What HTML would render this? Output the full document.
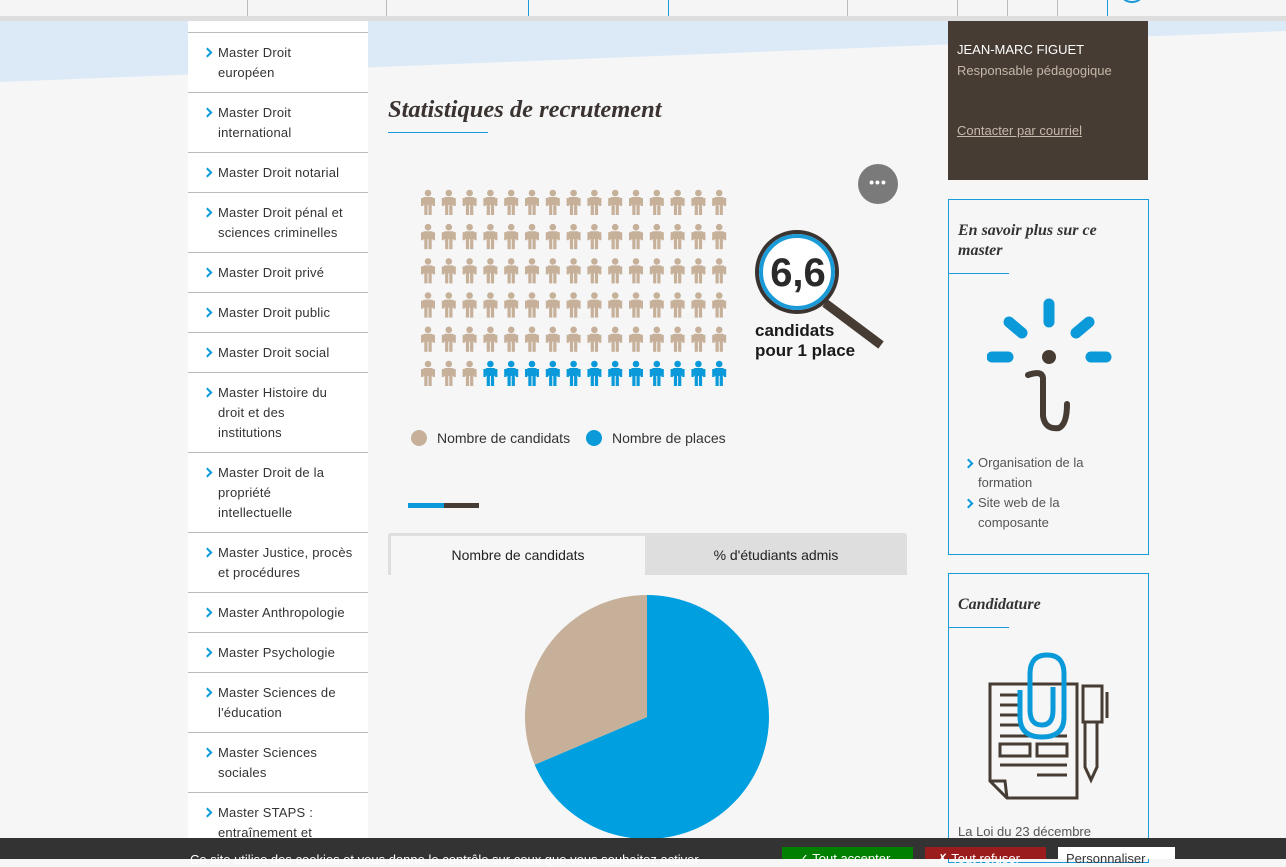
<!DOCTYPE html>
<html><head><meta charset="utf-8"><style>
*{margin:0;padding:0;box-sizing:border-box}
body{width:1286px;height:859px;overflow:hidden;background:#f6f6f6;font-family:"Liberation Sans",sans-serif;position:relative;color:#333}
.abs{position:absolute}
.sep{position:absolute;top:0;height:16px;width:1px;background:#bbb}
#side{left:188px;top:21px;width:180px;height:817px;background:#fff}
#side div{border-top:1px solid #bbb;padding:10px 8px 9px 30px;font-size:13px;line-height:20px;color:#333;position:relative;letter-spacing:.2px}
#side div:before{content:"";position:absolute;left:16px;top:16px;width:5px;height:5px;border-right:2px solid #0a9ad9;border-top:2px solid #0a9ad9;transform:rotate(45deg)}
.box{position:absolute;left:948px;width:201px;border:1px solid #1a9ad6}
.box h3{font-family:"Liberation Serif",serif;font-style:italic;font-weight:bold;font-size:16px;color:#333;padding:21px 9px 12px;line-height:20px}
.box .ul{width:60px;height:1px;background:#1a9ad6}
.lk{font-size:13px;line-height:20px;color:#555;padding-left:29px;position:relative}
.lk:before{content:"";position:absolute;left:16px;top:7px;width:5px;height:5px;border-right:2px solid #0a9ad9;border-top:2px solid #0a9ad9;transform:rotate(45deg)}
</style></head><body>
<div class="abs" style="left:0;top:0;width:1286px;height:16px;background:#f5f5f5"></div>
<div class="sep" style="left:247px"></div><div class="sep" style="left:386px"></div><div class="sep" style="left:528px;background:#1a9ad6"></div><div class="sep" style="left:668px;background:#1a9ad6"></div><div class="sep" style="left:847px"></div><div class="sep" style="left:957px"></div><div class="sep" style="left:1007px"></div><div class="sep" style="left:1057px"></div><div class="sep" style="left:1107px;background:#1a9ad6"></div>
<div class="abs" style="left:1122px;top:-10px;width:20px;height:13px;border-radius:50%;border:2px solid #1a9ad6"></div>
<div class="abs" style="left:0;top:16px;width:1286px;height:5px;background:#dedede"></div>
<svg class="abs" style="left:0;top:21px" width="1286" height="70"><polygon points="0,0 1286,0 1286,10 0,61" fill="#dceaf8"/></svg>

<div id="side" class="abs" style="padding-top:11px">
<div>Master Droit<br>européen</div>
<div>Master Droit<br>international</div>
<div>Master Droit notarial</div>
<div>Master Droit pénal et<br>sciences criminelles</div>
<div>Master Droit privé</div>
<div>Master Droit public</div>
<div>Master Droit social</div>
<div>Master Histoire du<br>droit et des<br>institutions</div>
<div>Master Droit de la<br>propriété<br>intellectuelle</div>
<div>Master Justice, procès<br>et procédures</div>
<div>Master Anthropologie</div>
<div>Master Psychologie</div>
<div>Master Sciences de<br>l'éducation</div>
<div>Master Sciences<br>sociales</div>
<div>Master STAPS :<br>entraînement et</div>
</div>

<div class="abs" style="left:388px;top:96px;font-family:'Liberation Serif',serif;font-style:italic;font-weight:bold;font-size:24.5px;color:#3a3330;white-space:nowrap">Statistiques de recrutement</div>
<div class="abs" style="left:388px;top:132px;width:100px;height:1px;background:#1a9ad6"></div>
<div class="abs" style="left:858px;top:164px;width:40px;height:40px;border-radius:50%;background:#7a7a7a;color:#fff;font-size:14px;text-align:center;line-height:36px;font-weight:bold;letter-spacing:1px">•••</div>

<svg class="abs" style="left:410px;top:180px" width="330" height="215" id="ppl"></svg>
<script>
(function(){var s='';for(var r=0;r<6;r++)for(var c=0;c<15;c++){var x=11+c*20.8,y=10+r*34.2,col=(r==5&&c>=3)?'#0a9ad9':'#c6b09a';
s+='<g fill="'+col+'" transform="translate('+x+','+y+')"><circle cx="7" cy="3" r="3.3"/><rect x="2" y="7" width="10" height="8" rx="1.5"/><rect x="0" y="8" width="2.4" height="8"/><rect x="11.6" y="8" width="2.4" height="8"/><rect x="3.3" y="14" width="3.2" height="11"/><rect x="7.5" y="14" width="3.2" height="11"/></g>';}
document.getElementById('ppl').innerHTML=s;})();
</script>

<svg class="abs" style="left:750px;top:225px" width="145" height="130">
<line x1="75" y1="78" x2="131" y2="120" stroke="#463c33" stroke-width="9"/>
<circle cx="47" cy="47" r="40" fill="#fff" stroke="#3a3330" stroke-width="4"/>
<circle cx="47" cy="47" r="36" fill="none" stroke="#1a9ad6" stroke-width="4"/>
<text x="48" y="61" text-anchor="middle" font-family="Liberation Sans" font-weight="bold" font-size="40" fill="#2a2a2a">6,6</text>
</svg>
<div class="abs" style="left:755px;top:321px;font-weight:bold;font-size:17px;line-height:20px;color:#1a1a1a">candidats<br>pour 1 place</div>

<div class="abs" style="left:411px;top:430px;width:16px;height:16px;border-radius:50%;background:#c6b09a"></div>
<div class="abs" style="left:437px;top:430px;font-size:14px;color:#333">Nombre de candidats</div>
<div class="abs" style="left:586px;top:430px;width:16px;height:16px;border-radius:50%;background:#0a9ad9"></div>
<div class="abs" style="left:612px;top:430px;font-size:14px;color:#333">Nombre de places</div>

<div class="abs" style="left:408px;top:503px;width:36px;height:5px;background:#0a9ad9"></div>
<div class="abs" style="left:444px;top:503px;width:35px;height:5px;background:#463c33"></div>

<div class="abs" style="left:388px;top:533px;width:519px;height:42px;background:#dedede;border-radius:3px 3px 0 0"></div>
<div class="abs" style="left:391px;top:536px;width:254px;height:39px;background:#f6f6f6;text-align:center;line-height:38px;font-size:14px;color:#222">Nombre de candidats</div>
<div class="abs" style="left:645px;top:536px;width:262px;height:39px;text-align:center;line-height:38px;font-size:14px;color:#222">% d'étudiants admis</div>

<svg class="abs" style="left:520px;top:590px" width="260" height="250">
<path d="M127,127 L127,5 A122,122 0 1,1 14.7,174.7 Z" fill="#009fdf"/>
<path d="M127,127 L14.7,174.7 A122,122 0 0,1 127,5 Z" fill="#c6b09a"/>
</svg>

<div class="abs" style="left:948px;top:21px;width:200px;height:159px;background:#463c33;padding:20px 9px">
<div style="color:#fff;font-size:13px;line-height:18px">JEAN-MARC FIGUET</div>
<div style="color:#c5b9ab;font-size:13px;line-height:20px;margin-top:2px">Responsable pédagogique</div>
<div style="color:#c5b9ab;font-size:13px;line-height:20px;margin-top:40px;text-decoration:underline">Contacter par courriel</div>
</div>

<div class="box" style="top:199px;height:356px">
<h3>En savoir plus sur ce<br>master</h3><div class="ul"></div>
<svg style="display:block;margin:24px 0 0 38px" width="125" height="135">
<g stroke="#0a9ad9" stroke-width="11" stroke-linecap="round">
<line x1="62" y1="6" x2="62" y2="24"/><line x1="22" y1="24" x2="35" y2="35"/><line x1="102" y1="24" x2="89" y2="35"/>
<line x1="5" y1="59" x2="21" y2="59"/><line x1="104" y1="59" x2="119" y2="59"/></g>
<circle cx="62" cy="59" r="7" fill="#463c33"/>
<path d="M41,77 Q55,72 56,80 L56,118 Q58,132 72,130 Q80,126 80,106" fill="none" stroke="#463c33" stroke-width="6" stroke-linecap="round"/>
</svg>
<div style="margin-top:20px"><div class="lk">Organisation de la<br>formation</div><div class="lk">Site web de la<br>composante</div></div>
</div>

<div class="box" style="top:573px;height:290px">
<h3>Candidature</h3><div class="ul"></div>
<svg style="display:block;margin:24px 0 0 38px" width="125" height="150">
<g fill="none" stroke="#463c33" stroke-width="3">
<path d="M3,32 L90,32 L90,146 L20,146 L3,129 Z"/><path d="M3,129 L18,129 L20,146"/>
<line x1="13" y1="43" x2="32" y2="43"/><line x1="13" y1="53" x2="32" y2="53"/><line x1="13" y1="63" x2="32" y2="63"/><line x1="13" y1="73" x2="32" y2="73"/>
<line x1="13" y1="84" x2="80" y2="84"/><rect x="13" y="92" width="30" height="12"/><rect x="50" y="92" width="30" height="12"/>
<line x1="13" y1="113" x2="80" y2="113"/><line x1="50" y1="123" x2="80" y2="123"/>
<rect x="96" y="34" width="19" height="36"/><line x1="120" y1="40" x2="120" y2="66"/>
<path d="M98,70 L98,115 L104,128 L110,115 L110,70"/></g>
<path d="M33,38 L33,65 Q33,85 55,85 Q77,85 77,65 L77,22 Q77,3 60,3 Q43,3 43,22 L43,58 Q43,73 55,73 Q66,73 66,58 L66,35" fill="none" stroke="#0a9ad9" stroke-width="5"/>
</svg>
<div style="font-size:13px;color:#555;padding:22px 9px">La Loi du 23 décembre</div>
</div>

<div class="abs" style="left:0;top:838px;width:1286px;height:21px;background:#333"></div>
<div class="abs" style="left:190px;top:852px;font-size:13px;color:#fff;white-space:nowrap">Ce site utilise des cookies et vous donne le contrôle sur ceux que vous souhaitez activer</div>
<div class="abs" style="left:782px;top:847px;width:131px;height:12px;background:#008000;color:#fff;font-size:13px;padding:4px 0 0 16px">✓ Tout accepter</div>
<div class="abs" style="left:925px;top:847px;width:121px;height:12px;background:#9b1c1c;color:#fff;font-size:13px;padding:4px 0 0 12px">✗ Tout refuser</div>
<div class="abs" style="left:1058px;top:847px;width:117px;height:12px;background:#fff;color:#333;font-size:13px;padding:4px 0 0 8px">Personnaliser</div>
</body></html>
